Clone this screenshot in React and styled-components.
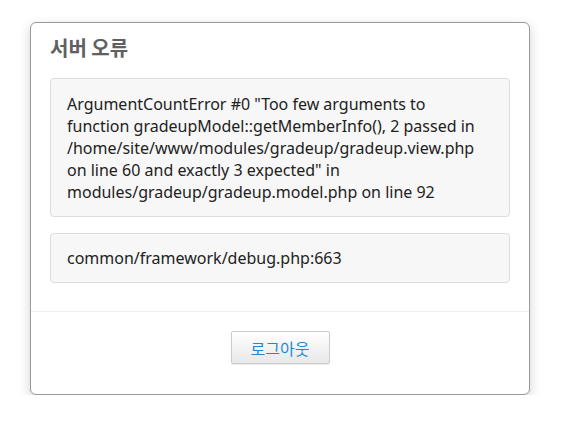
import React from 'react'
import { styled, createGlobalStyle } from 'styled-components'

const Global = createGlobalStyle`
  body {
    margin: 0;
    background: #fff;
    font-family: "Noto Sans", "Noto Sans CJK KR", sans-serif;
  }
`

const Page = styled.div`
  padding: 22px 54px 0 30px;
`

const Card = styled.div`
  width: 500px;
  box-sizing: border-box;
  border: 1px solid #999;
  border-radius: 6px;
  background: #fff;
  box-shadow: 0 4px 12px rgba(0, 0, 0, 0.18);
`

const Body = styled.div`
  padding: 11px 19px 28px 19px;
`

const Title = styled.h2`
  margin: 0 0 16px;
  font-family: "Noto Sans CJK KR", sans-serif;
  font-size: 20px;
  font-weight: bold;
  line-height: 28px;
  color: #606060;
`

const Box = styled.div`
  background: #f7f7f7;
  border: 1px solid #ddd;
  border-radius: 4px;
  padding: ${p => p.$tall ? '14px 24px 13px 16px' : '13px 24px 13px 16px'};
  margin-bottom: 16px;
  font-size: 16px;
  line-height: 22px;
  color: #222;
  &:last-child {
    margin-bottom: 0;
  }
`

const Footer = styled.div`
  border-top: 1px solid #eee;
  display: flex;
  justify-content: center;
  padding: 19px 0 30px;
`

const Button = styled.button`
  width: 99px;
  height: 33px;
  border: 1px solid #ccc;
  border-radius: 2px;
  background: linear-gradient(#fff, #e8e8e8);
  color: #1a8ad6;
  font-family: "Noto Sans CJK KR", sans-serif;
  font-size: 16px;
  cursor: pointer;
  box-shadow: 0 1px 1px rgba(0, 0, 0, 0.08);
`

const App = () => {
  return (
    <Page>
      <Global />
      <Card>
        <Body>
          <Title>서버 오류</Title>
          <Box $tall>
            ArgumentCountError #0 "Too few arguments to function gradeupModel::getMemberInfo(), 2 passed in /home/site/www/modules/gradeup/gradeup.view.php on line 60 and exactly 3 expected" in modules/gradeup/gradeup.model.php on line 92
          </Box>
          <Box>common/framework/debug.php:663</Box>
        </Body>
        <Footer>
          <Button>로그아웃</Button>
        </Footer>
      </Card>
    </Page>
  )
}

export default App
